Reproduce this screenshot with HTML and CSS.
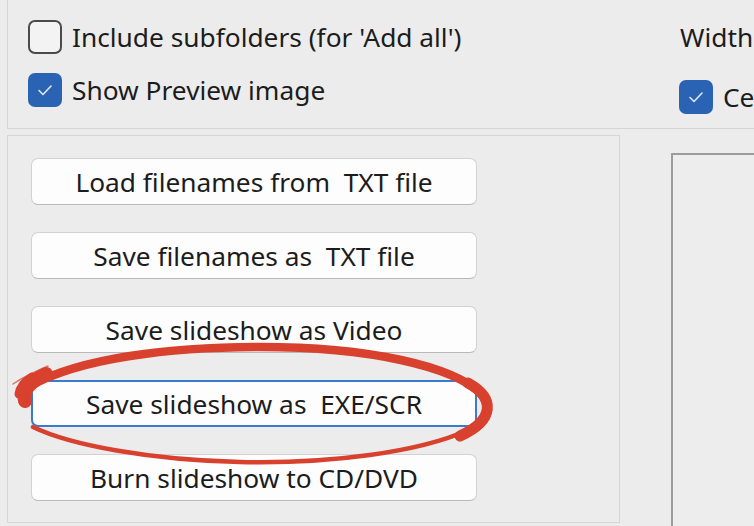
FILE: index.html
```html
<!DOCTYPE html>
<html lang="en">
<head>
    <meta charset="UTF-8">
    <meta name="viewport" content="width=device-width, initial-scale=1.0">
    <title>Slideshow</title>
    <link rel="stylesheet" href="styles.css">
</head>
<body>
    <div class="dialog">
        <div class="options">
            <div class="opt-left">
                <label class="check"><span class="box"></span>Include subfolders (for 'Add all')</label>
                <label class="check"><span class="box checked"><svg viewBox="0 0 34 34"><path d="M11 17.5 L15 21.5 L23 13"/></svg></span>Show Preview image</label>
            </div>
            <div class="opt-right">
                <div class="field-label">Width</div>
                <label class="check"><span class="box checked"><svg viewBox="0 0 34 34"><path d="M11 17.5 L15 21.5 L23 13"/></svg></span>Ce</label>
            </div>
        </div>

        <div class="lower">
            <div class="actions">
                <button class="btn">Load filenames from&nbsp; TXT file</button>
                <button class="btn">Save filenames as&nbsp; TXT file</button>
                <button class="btn">Save slideshow as Video</button>
                <button class="btn focused">Save slideshow as&nbsp; EXE/SCR</button>
                <button class="btn">Burn slideshow to CD/DVD</button>
            </div>
            <div class="preview"></div>
        </div>

        <!-- red marker circle drawn over the dialog -->
        <svg class="mark" viewBox="0 0 754 526">
            <path class="m-top" d="M30 386 C80 358 170 347 260 347 C370 347 452 366 482 394"/>
            <path class="m-right" d="M468 383 C495 398 495 420 460 436"/>
            <path class="m-bottom" d="M468 430 C420 452 330 464 240 462 C150 460 70 445 33 427"/>
            <path class="m-tip" d="M25 401 C22 390 30 382 46 374"/>
            <path class="m-tip2" d="M19 394 C20 387 24 382 32 377"/>
            <path class="m-hair" d="M13 384 C22 378 34 372 48 366"/>
        </svg>
    </div>
</body>
</html>
```

FILE: styles.css
```css
body {
    margin: 0;
    background-color: #ececec;
    font-family: 'Noto Sans', 'Open Sans', sans-serif;
    font-size: 26.3px;
    color: #1c1c1c;
    overflow: hidden;
}

.dialog {
    position: relative;
    width: 754px;
    height: 526px;
    overflow: hidden;
}

.options {
    display: flex;
    height: 128px;
    margin-left: 7px;
    border-left: 1px solid #d6d6d6;
    border-bottom: 1px solid #d6d6d6;
}

.opt-left {
    flex: 0 0 671px;
    box-sizing: border-box;
    padding: 20px 0 0 20px;
    display: flex;
    flex-direction: column;
    gap: 19px;
}

.opt-right {
    display: flex;
    flex-direction: column;
    gap: 24px;
    padding-top: 19px;
    white-space: nowrap;
}

.field-label {
    height: 37px;
    line-height: 37px;
    margin-left: 1px;
}

.check {
    display: flex;
    align-items: center;
    gap: 10px;
    height: 34px;
    white-space: nowrap;
}

.box {
    flex: 0 0 auto;
    width: 34px;
    height: 34px;
    box-sizing: border-box;
    border: 2px solid #4a4a4a;
    border-radius: 7px;
    background-color: #f3f3f3;
}

.box.checked {
    border: none;
    background-color: #2a63b4;
}

.box svg {
    display: block;
    width: 34px;
    height: 34px;
}

.box svg path {
    fill: none;
    stroke: #dfe8f6;
    stroke-width: 1.6;
    stroke-linecap: round;
    stroke-linejoin: round;
}

.lower {
    display: flex;
    margin-top: 6px;
    height: 391px;
}

.actions {
    flex: 0 0 613px;
    box-sizing: border-box;
    height: 388px;
    margin-left: 7px;
    border: 1px solid #d6d6d6;
    padding: 22px 0 0 23px;
    display: flex;
    flex-direction: column;
    gap: 27px;
}

.btn {
    width: 446px;
    height: 47px;
    box-sizing: border-box;
    background: #fdfdfd;
    border: 1px solid #d2d2d2;
    border-bottom-color: #b9b9b9;
    border-radius: 7px;
    font-family: inherit;
    font-size: 26.3px;
    color: #1c1c1c;
    padding: 0;
    white-space: nowrap;
}

.btn.focused {
    border: 2px solid #3a7bd0;
}

.preview {
    flex: 1;
    margin: 18px 0 0 51px;
    border-top: 2px solid #9c9c9c;
    border-left: 2px solid #9c9c9c;
    background-color: #ededed;
}

.mark {
    position: absolute;
    left: 0;
    top: 0;
    width: 754px;
    height: 526px;
    pointer-events: none;
}

.mark path {
    fill: none;
    stroke: #d9412f;
    stroke-linecap: round;
}

.m-top { stroke-width: 8.5; }
.m-right { stroke-width: 11; }
.m-bottom { stroke-width: 4.5; }
.m-tip { stroke-width: 14; }
.m-tip2 { stroke-width: 9; }
.m-hair { stroke-width: 1.5; opacity: 0.7; }
```
